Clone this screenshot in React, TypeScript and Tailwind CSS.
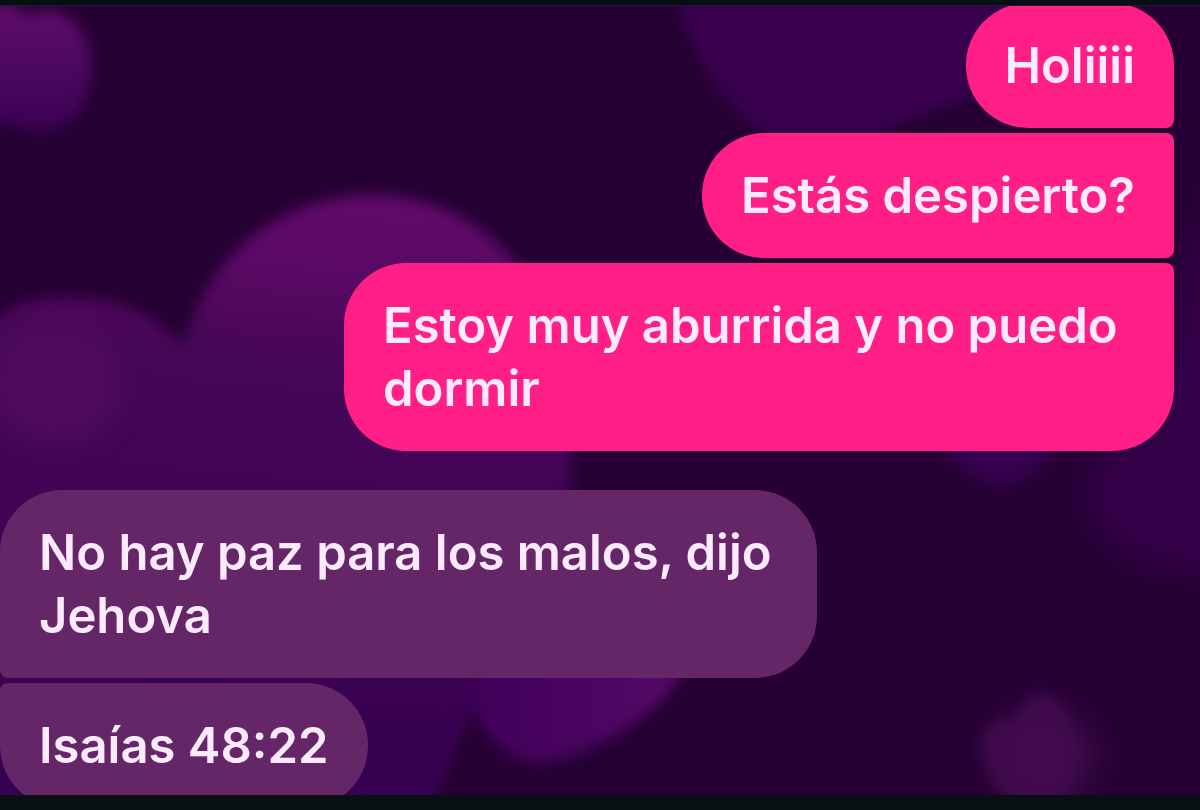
type Message = {
    id: number;
    text: string;
    mine: boolean;
    shape: string;
};

const MESSAGES: Message[] = [
    { id: 1, text: "Holiiii", mine: true, shape: "rounded-br-lg" },
    { id: 2, text: "Estás despierto?", mine: true, shape: "rounded-r-lg" },
    { id: 3, text: "Estoy muy aburrida y no puedo dormir", mine: true, shape: "rounded-tr-lg" },
    { id: 4, text: "No hay paz para los malos, dijo Jehova", mine: false, shape: "rounded-bl-lg" },
    { id: 5, text: "Isaías 48:22", mine: false, shape: "rounded-tl-lg" },
];

// Fondo del chat: corazones desenfocados
function HeartsWallpaper() {
    return (
        <svg
            className="absolute inset-0 h-full w-full"
            viewBox="0 0 1200 810"
            preserveAspectRatio="xMidYMid slice"
            aria-hidden="true"
        >
            <defs>
                <filter id="soft" x="-20%" y="-20%" width="140%" height="140%" colorInterpolationFilters="sRGB">
                    <feGaussianBlur stdDeviation="7" />
                </filter>
                <filter id="softer" x="-40%" y="-40%" width="180%" height="180%" colorInterpolationFilters="sRGB">
                    <feGaussianBlur stdDeviation="14" />
                </filter>
                <linearGradient id="big" gradientUnits="userSpaceOnUse" x1="380" y1="190" x2="330" y2="800">
                    <stop offset="0" stopColor="#620a6b" />
                    <stop offset="0.14" stopColor="#5a0964" />
                    <stop offset="0.27" stopColor="#480757" />
                    <stop offset="0.5" stopColor="#420456" />
                    <stop offset="1" stopColor="#360050" />
                </linearGradient>
                <linearGradient id="corner" x1="0" y1="0" x2="0" y2="1">
                    <stop offset="0" stopColor="#650c6c" />
                    <stop offset="0.5" stopColor="#4c0a60" />
                    <stop offset="1" stopColor="#3b0054" />
                </linearGradient>
                <linearGradient id="small" x1="0" y1="0" x2="1" y2="0">
                    <stop offset="0" stopColor="#42005a" />
                    <stop offset="0.6" stopColor="#4b0663" />
                    <stop offset="1" stopColor="#5a0a6a" />
                </linearGradient>
            </defs>

            <rect width="1200" height="810" fill="#260034" />

            <g filter="url(#soft)">
                <path
                    d="M-20 330C10 300 45 296 80 298C125 300 160 320 184 346C200 270 270 194 375 195C470 197 530 260 555 340C590 450 570 560 500 660C470 710 450 760 425 830L-20 830Z"
                    fill="url(#big)"
                />
                <path d="M480 640L690 640C690 690 625 742 550 762C520 768 490 745 476 715Z" fill="url(#small)" />
                <path
                    d="M-20 -10L30 15C60 0 88 25 91 60C93 95 78 128 50 130C30 132 10 124 -20 122Z"
                    fill="url(#corner)"
                />
                <path
                    d="M675 -10C690 50 710 90 765 135L880 135C920 110 960 105 1010 80L1010 -10Z"
                    fill="#39004e"
                />
                <path d="M935 440L1060 440C1050 465 1030 480 1003 486C975 482 950 465 935 440Z" fill="#36004e" />
            </g>

            <g filter="url(#softer)">
                <ellipse cx="55" cy="385" rx="65" ry="60" fill="#520e60" opacity="0.7" />
                <path d="M1230 150C1200 200 1180 300 1150 420C1080 450 1060 500 1130 560L1230 580Z" fill="#330047" />
                <ellipse cx="1045" cy="755" rx="55" ry="50" fill="#380a44" />
            </g>

            <g filter="url(#soft)">
                <path
                    d="M1043 694C1060 695 1068 712 1074 735C1088 760 1070 785 1060 810L1015 810C990 785 972 745 988 726C1000 716 1012 720 1018 718C1022 704 1028 693 1043 694Z"
                    fill="#430b50"
                    opacity="0.8"
                />
            </g>
        </svg>
    );
}

function Bubble({ message }: { message: Message }) {
    return (
        <li
            className={`w-fit rounded-[62px] px-[39px] py-[31px] ${message.shape} ${
                message.mine ? "max-w-[830px] self-end bg-[#ff1f86]" : "max-w-[817px] self-start bg-[#652668]"
            }`}
        >
            <p className="text-[49px] leading-[63px] font-semibold text-[#fdeaff]">{message.text}</p>
        </li>
    );
}

export default function App() {
    const mine = MESSAGES.filter((m) => m.mine);
    const theirs = MESSAGES.filter((m) => !m.mine);

    return (
        <main className="relative min-h-screen overflow-hidden bg-[#260034] font-[Inter,sans-serif]">
            <HeartsWallpaper />

            <div className="relative flex flex-col gap-[39px] pt-[3px]">
                <ul className="flex flex-col gap-[5px] pr-[26px]">
                    {mine.map((m) => (
                        <Bubble key={m.id} message={m} />
                    ))}
                </ul>
                <ul className="flex flex-col gap-[5px]">
                    {theirs.map((m) => (
                        <Bubble key={m.id} message={m} />
                    ))}
                </ul>
            </div>

            {/* Barras del sistema */}
            <div className="absolute inset-x-0 top-0 h-1.5 border-b border-[#24182c] bg-[#060e16]" />
            <div className="absolute inset-x-0 bottom-0 h-[15px] bg-[#081014]" />
        </main>
    );
}
